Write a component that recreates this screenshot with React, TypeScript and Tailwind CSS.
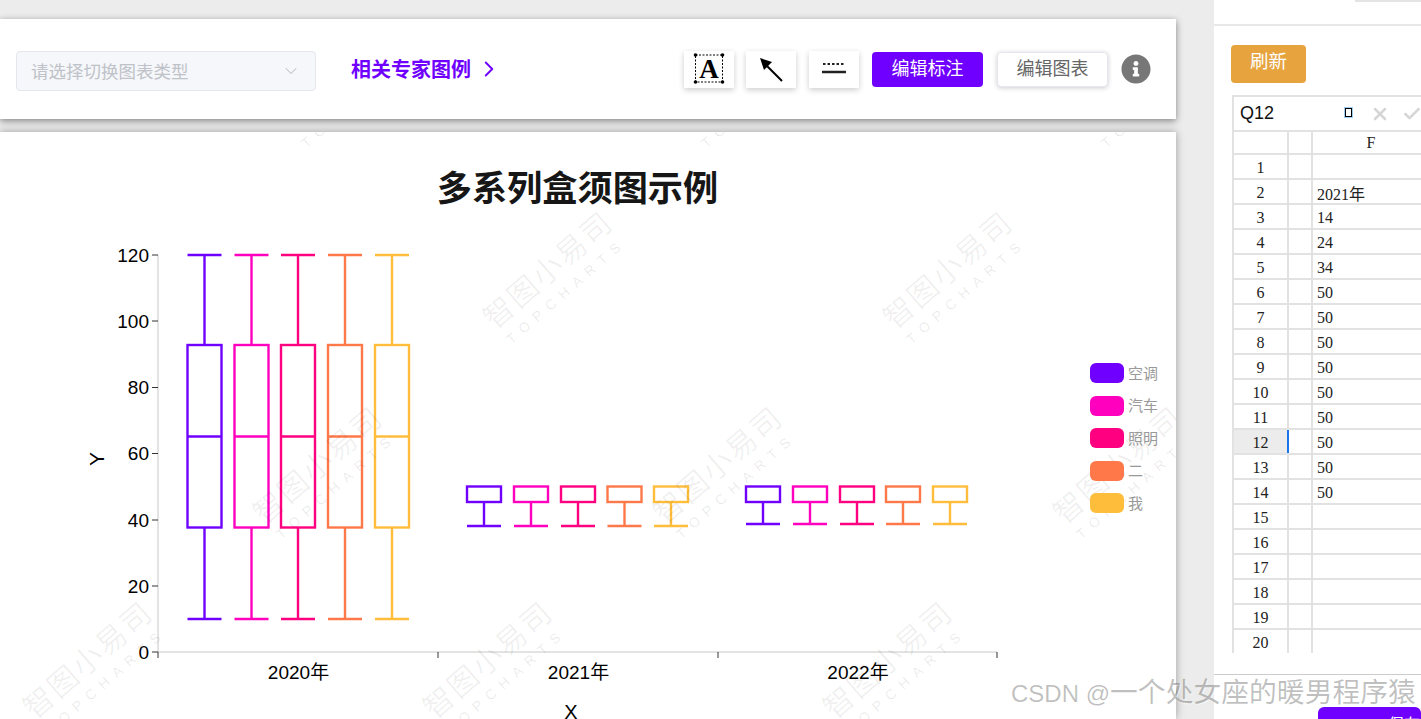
import { Check, ChevronDown, ChevronRight, X } from 'lucide-react';
import { FaInfoCircle } from 'react-icons/fa';

const font = '"Noto Sans CJK SC", sans-serif';
const latinFont = '"Liberation Sans", "Noto Sans CJK SC", sans-serif';

const series = [
  { name: '空调', color: '#6f00ff' },
  { name: '汽车', color: '#ff00bf' },
  { name: '照明', color: '#ff0080' },
  { name: '二', color: '#ff7849' },
  { name: '我', color: '#ffbd3c' },
];

// x centres per group, y values already in pixels
const groups = [
  { xs: [204.5, 251.5, 298, 345, 392], top: 255, q3: 345, med: 436.5, q1: 527.5, low: 619 },
  { xs: [484, 531, 578, 624.5, 671], top: 486.5, q3: 486.5, med: 486.5, q1: 502, low: 526 },
  { xs: [763, 810, 857, 903, 950], top: 486.5, q3: 486.5, med: 486.5, q1: 502, low: 524 },
];

const yTicks = [
  { y: 255, label: '120' },
  { y: 321, label: '100' },
  { y: 387.5, label: '80' },
  { y: 453.5, label: '60' },
  { y: 520, label: '40' },
  { y: 586, label: '20' },
  { y: 652, label: '0' },
];

const marks = [
  [350, 82],
  [750, 82],
  [1150, 82],
  [555, 278],
  [955, 278],
  [325, 473],
  [725, 473],
  [1125, 473],
  [95, 668],
  [495, 668],
  [895, 668],
];

const sheetRows: [number, string][] = [
  [1, ''],
  [2, '2021年'],
  [3, '14'],
  [4, '24'],
  [5, '34'],
  [6, '50'],
  [7, '50'],
  [8, '50'],
  [9, '50'],
  [10, '50'],
  [11, '50'],
  [12, '50'],
  [13, '50'],
  [14, '50'],
  [15, ''],
  [16, ''],
  [17, ''],
  [18, ''],
  [19, ''],
  [20, ''],
];

const Chart = () => (
  <svg viewBox="0 132 1176 587" className="block h-[587px] w-[1176px]">
    <text x="577.5" y="201" textAnchor="middle" fontSize="35.2" fontWeight="700" fill="#161616" style={{ fontFamily: font }}>
      多系列盒须图示例
    </text>

    {/* axes */}
    <path d="M158 255V652H997" fill="none" stroke="#c8c8c8" strokeWidth="1" />
    {yTicks.map((t) => (
      <g key={t.label}>
        <line x1="152" x2="158" y1={t.y} y2={t.y} stroke="#333" />
        <text x="149" y={t.y + 6.5} textAnchor="end" fontSize="19" fill="#000" style={{ fontFamily: latinFont }}>
          {t.label}
        </text>
      </g>
    ))}
    {[158, 438, 718, 997].map((x) => (
      <line key={x} x1={x} x2={x} y1="652" y2="658" stroke="#333" />
    ))}
    {[
      [298.5, '2020年'],
      [578.5, '2021年'],
      [858, '2022年'],
    ].map(([x, label]) => (
      <text key={label} x={x} y="678.5" textAnchor="middle" fontSize="19" fill="#000" style={{ fontFamily: latinFont }}>
        {label}
      </text>
    ))}
    <text x="571" y="719" textAnchor="middle" fontSize="20" fill="#000" style={{ fontFamily: latinFont }}>
      X
    </text>
    <text
      x="0"
      y="0"
      transform="translate(104 459) rotate(-90)"
      textAnchor="middle"
      fontSize="21"
      fill="#000"
      style={{ fontFamily: latinFont }}
    >
      Y
    </text>

    {/* boxes */}
    {groups.map((g, gi) =>
      g.xs.map((x, i) => (
        <g key={`${gi}-${i}`} fill="none" stroke={series[i].color} strokeWidth="2.4">
          <line x1={x - 17} x2={x + 17} y1={g.low} y2={g.low} />
          <line x1={x} x2={x} y1={g.q1} y2={g.low} />
          {gi === 0 && (
            <>
              <line x1={x - 17} x2={x + 17} y1={g.top} y2={g.top} />
              <line x1={x} x2={x} y1={g.top} y2={g.q3} />
              <line x1={x - 17} x2={x + 17} y1={g.med} y2={g.med} />
            </>
          )}
          <rect x={x - 17} y={g.q3} width="34" height={g.q1 - g.q3} />
        </g>
      )),
    )}

    {/* watermark */}
    {marks.map(([x, y]) => (
      <g key={`${x}-${y}`} transform={`translate(${x} ${y}) rotate(-41)`} textAnchor="middle" fill="#000">
        <text x="0" y="0" fontSize="30" fillOpacity="0.06" style={{ fontFamily: font, letterSpacing: '2px' }}>
          智图小易司
        </text>
        <text x="0" y="22" fontSize="14" fillOpacity="0.09" style={{ fontFamily: latinFont, letterSpacing: '7.5px' }}>
          TOPCHARTS
        </text>
      </g>
    ))}
  </svg>
);

const Sheet = () => (
  <div className="ml-[18px] mt-3 border-t-2 border-l-2 border-[#e2e2e2] text-[16px] text-[#222]" style={{ fontFamily: '"Liberation Serif", "Noto Sans CJK SC", serif' }}>
    <div className="flex h-[35px] items-center border-b-2 border-[#e2e2e2]">
      <div className="flex h-full w-[125px] shrink-0 items-center justify-between pl-[6px] pr-[5px]">
        <span className="text-[18px] text-[#111]" style={{ fontFamily: latinFont }}>
          Q12
        </span>
        <span className="mb-[2px] mr-[2px] h-[9px] w-[7px] border border-[#000] outline outline-1 outline-[#0a84d8]/40" />
      </div>
      <div className="h-full w-px bg-[#e2e2e2]" />
      <X size={20} strokeWidth={3} className="ml-[11px] shrink-0 text-[#d6d6d6]" />
      <Check size={20} strokeWidth={3} className="ml-[12px] shrink-0 text-[#d6d6d6]" />
    </div>
    <div className="flex h-[23px] border-b-2 border-[#e2e2e2]">
      <div className="w-[55px] shrink-0 border-r-2 border-[#e2e2e2]" />
      <div className="w-[24px] shrink-0 border-r-2 border-[#e2e2e2]" />
      <div className="w-[116px] shrink-0 text-center leading-[22px]">F</div>
    </div>
    <div className="h-[498px] overflow-hidden">
      {sheetRows.map(([n, value]) => (
        <div key={n} className="flex h-[25px] border-b-2 border-[#e2e2e2]">
          <div className={`w-[55px] shrink-0 border-r-2 text-center leading-[25px] ${n === 12 ? 'border-[#1a73e8] bg-[#ececec]' : 'border-[#e2e2e2]'}`}>
            {n}
          </div>
          <div className="w-[24px] shrink-0 border-r-2 border-[#e2e2e2]" />
          <div className={`pl-1 ${n === 2 ? 'leading-[30px]' : 'leading-[26px]'}`}>{value}</div>
        </div>
      ))}
    </div>
  </div>
);

const ToolButton = ({ children }: { children: React.ReactNode }) => (
  <div className="flex h-[37px] w-[50px] items-center justify-center bg-white shadow-[0_2px_6px_rgba(0,0,0,0.2)]">{children}</div>
);

export default function App() {
  return (
    <div className="relative flex h-screen w-full overflow-hidden bg-[#ececec]" style={{ fontFamily: font }}>
      <div className="flex w-[1176px] shrink-0 flex-col pt-[19px]">
        {/* toolbar */}
        <div className="flex h-[100px] shrink-0 items-center bg-white pl-4 pr-[25px] shadow-[0_2px_7px_rgba(0,0,0,0.45)]">
          <div className="mt-1 flex h-10 w-[300px] items-center justify-between rounded border border-[#e4e7ed] bg-[#f5f7fa] pl-[14px] pr-[14px] text-[17.5px] text-[#bfc2c8]">
            <span>请选择切换图表类型</span>
            <ChevronDown size={20} strokeWidth={1.25} />
          </div>
          <div className="ml-[35px] flex items-center gap-[5px] text-[20px] font-bold text-[#6f00ff]">
            相关专家图例
            <ChevronRight size={26} strokeWidth={1.75} />
          </div>
          <div className="ml-auto flex items-center">
            <ToolButton>
              <svg width="32" height="32" viewBox="0 0 32 32">
                <rect x="2.5" y="2" width="27" height="27" fill="none" stroke="#000" strokeWidth="1" strokeDasharray="2 1.5" />
                {[
                  [2.5, 2],
                  [29.5, 2],
                  [2.5, 29],
                  [29.5, 29],
                ].map(([cx, cy]) => (
                  <circle key={`${cx}-${cy}`} cx={cx} cy={cy} r="1.8" fill="#000" />
                ))}
                <text x="16" y="25" textAnchor="middle" fontSize="27" fontWeight="700" fill="#000" style={{ fontFamily: '"Liberation Serif", serif' }}>
                  A
                </text>
              </svg>
            </ToolButton>
            <div className="ml-3">
              <ToolButton>
                <svg width="28" height="28" viewBox="0 0 28 28">
                  <path d="M25 26L8 9" stroke="#000" strokeWidth="2" />
                  <path d="M3 3L15 7L7 15Z" fill="#000" />
                </svg>
              </ToolButton>
            </div>
            <div className="ml-[13px]">
              <ToolButton>
                <svg width="26" height="14" viewBox="0 0 26 14">
                  <path d="M2 2H24" stroke="#222" strokeWidth="2" strokeDasharray="2.5 2" />
                  <path d="M1 10H25" stroke="#222" strokeWidth="2.5" />
                </svg>
              </ToolButton>
            </div>
            <div className="ml-[13px] flex h-[35px] w-[111px] items-center justify-center rounded bg-[#6f00ff] pb-1 text-[18px] text-white">编辑标注</div>
            <div className="ml-[14px] flex h-[35px] w-[111px] items-center justify-center rounded border border-[#e4e7ed] bg-white pb-1 text-[18px] text-[#666] shadow-[0_1px_5px_rgba(0,0,0,0.2)]">
              编辑图表
            </div>
            <FaInfoCircle className="ml-[13px] text-[#777]" size={30} />
          </div>
        </div>

        {/* chart panel */}
        <div className="relative mt-[13px] flex-1 bg-white shadow-[0_0_8px_rgba(0,0,0,0.35)]">
          <Chart />
          <div className="absolute left-[1090px] top-[231px] flex flex-col gap-[12.5px]">
            {series.map((s) => (
              <div key={s.name} className="flex h-5 items-center gap-[4px] text-[15px] text-[#999]">
                <span className="h-5 w-[34px] rounded-md" style={{ backgroundColor: s.color }} />
                {s.name}
              </div>
            ))}
          </div>
        </div>
      </div>

      {/* right panel */}
      <div className="ml-[38px] flex w-[207px] shrink-0 flex-col bg-white">
        <div className="h-[26px] shrink-0 border-b-2 border-[#e8e8e8]">
          <div className="ml-[141px] h-[2px] bg-[#e4e4e4]" />
        </div>
        <div className="ml-[17px] mt-[19px] flex h-[38px] w-[75px] shrink-0 items-center justify-center rounded bg-[#e6a33e] pb-[6px] text-[18.5px] text-white">刷新</div>
        <Sheet />
        <div className="mt-auto h-[45px] shrink-0 border-t border-[#cccccc]">
          <div className="ml-[104px] mt-[32px] h-[20px] rounded-t-md bg-[#6f00ff] pl-[70px] pt-[6px] text-[16px] leading-[20px] text-white">保存</div>
        </div>
      </div>

      {/* site stamp */}
      <div className="absolute left-[1011px] top-[674px] whitespace-nowrap text-[24px] leading-[38px] text-black/25 [text-shadow:1px_1px_1px_rgba(255,255,255,0.6)]" style={{ fontFamily: latinFont }}>
        CSDN @<span className="text-[27.8px]">一个处女座的暖男程序猿</span>
      </div>
    </div>
  );
}
